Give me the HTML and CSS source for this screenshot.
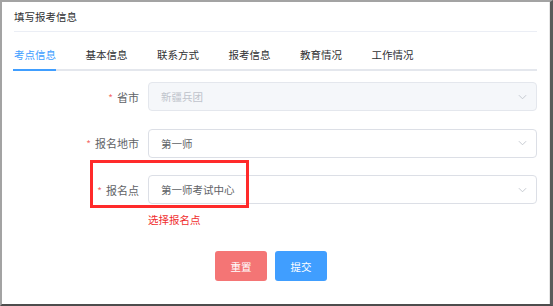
FILE: index.html
```html
<!DOCTYPE html>
<html lang="zh-CN">
<head>
  <meta charset="UTF-8">
  <title>填写报考信息</title>
  <link rel="stylesheet" href="styles.css">
</head>
<body>
  <div class="frame">
    <div class="card">
      <div class="card-header">填写报考信息</div>

      <div class="tabs">
        <div class="tab active">考点信息</div>
        <div class="tab">基本信息</div>
        <div class="tab">联系方式</div>
        <div class="tab">报考信息</div>
        <div class="tab">教育情况</div>
        <div class="tab">工作情况</div>
      </div>

      <div class="form">
        <div class="form-item">
          <label class="label"><span class="req">*</span>省市</label>
          <div class="select disabled">
            <span>新疆兵团</span>
            <svg class="arrow" viewBox="0 0 10 6"><path d="M1 1l4 4 4-4" /></svg>
          </div>
        </div>

        <div class="form-item">
          <label class="label"><span class="req">*</span>报名地市</label>
          <div class="select">
            <span>第一师</span>
            <svg class="arrow" viewBox="0 0 10 6"><path d="M1 1l4 4 4-4" /></svg>
          </div>
        </div>

        <div class="form-item marked">
          <label class="label"><span class="req">*</span>报名点</label>
          <div class="select">
            <span>第一师考试中心</span>
            <svg class="arrow" viewBox="0 0 10 6"><path d="M1 1l4 4 4-4" /></svg>
          </div>
          <div class="highlight"></div>
        </div>
        <div class="error">选择报名点</div>

        <div class="actions">
          <button class="btn btn-reset">重置</button>
          <button class="btn btn-submit">提交</button>
        </div>
      </div>
    </div>
  </div>
</body>
</html>
```

FILE: styles.css
```css
:root {
  --primary: #409eff;
  --danger: #f56c6c;
  --text: #606266;
  --title: #303133;
  --border: #dcdfe6;
  --line: #ebeef5;
}

* {
  box-sizing: border-box;
}

body {
  margin: 0;
  font-family: "Noto Sans CJK SC", "Noto Sans", sans-serif;
  font-size: 10.5px;
  background: #fff;
}

.frame {
  width: 553px;
  height: 306px;
  border-top: 2px solid #a3a3a3;
  border-left: 2px solid #a3a3a3;
  border-right: 3px solid #5a5a5a;
  border-bottom: 2px solid #4d4d4d;
}

.card {
  height: 100%;
  background: #fff;
  border-right: 1px solid #e6e6e6;
}

.card-header {
  margin: 0 12px;
  height: 30px;
  line-height: 29px;
  color: var(--title);
  border-bottom: 1px solid var(--line);
}

.tabs {
  display: flex;
  gap: 29.5px;
  margin: 0 12px;
  border-bottom: 2px solid #e4e7ed;
}

.tab {
  position: relative;
  padding: 13px 0 4px;
  line-height: 20px;
  color: var(--title);
}

.tab.active {
  color: var(--primary);
}

.tab.active::after {
  content: "";
  position: absolute;
  left: -1px;
  right: 0;
  bottom: -2px;
  height: 2px;
  background: var(--primary);
}

.form {
  padding-top: 11px;
  margin-right: 12px;
}

.form-item {
  position: relative;
  display: flex;
  align-items: center;
  margin-bottom: 17.5px;
}

.form-item.marked {
  margin-bottom: 0;
}

.label {
  width: 146px;
  padding-right: 9px;
  text-align: right;
  color: var(--text);
  font-size: 11px;
}

.req {
  color: var(--danger);
  margin-right: 4px;
  font-size: 10px;
}

.select {
  flex: 1;
  height: 29px;
  display: flex;
  align-items: center;
  justify-content: space-between;
  padding: 0 9px 0 12px;
  border: 1px solid var(--border);
  border-radius: 4px;
  color: var(--text);
  background: #fff;
}

.select.disabled {
  background: #f5f7fa;
  border-color: #e4e7ed;
  color: #c0c4cc;
}

.arrow {
  width: 9px;
  height: 6px;
  fill: none;
  stroke: #c0c4cc;
  stroke-width: 1;
}

.highlight {
  position: absolute;
  left: 88px;
  top: -15px;
  width: 159px;
  height: 48px;
  border: 3px solid #ff2a2a;
}

.error {
  padding-left: 146px;
  margin-top: 8px;
  line-height: 16px;
  color: #f02d2d;
}

.actions {
  display: flex;
  gap: 8px;
  padding-left: 213px;
  margin-top: 23px;
}

.btn {
  width: 52px;
  height: 30px;
  border: none;
  border-radius: 3px;
  color: #fff;
  font-family: inherit;
  font-size: 10.5px;
  cursor: pointer;
}

.btn-reset {
  background: #f47575;
}

.btn-submit {
  background: var(--primary);
}
```
